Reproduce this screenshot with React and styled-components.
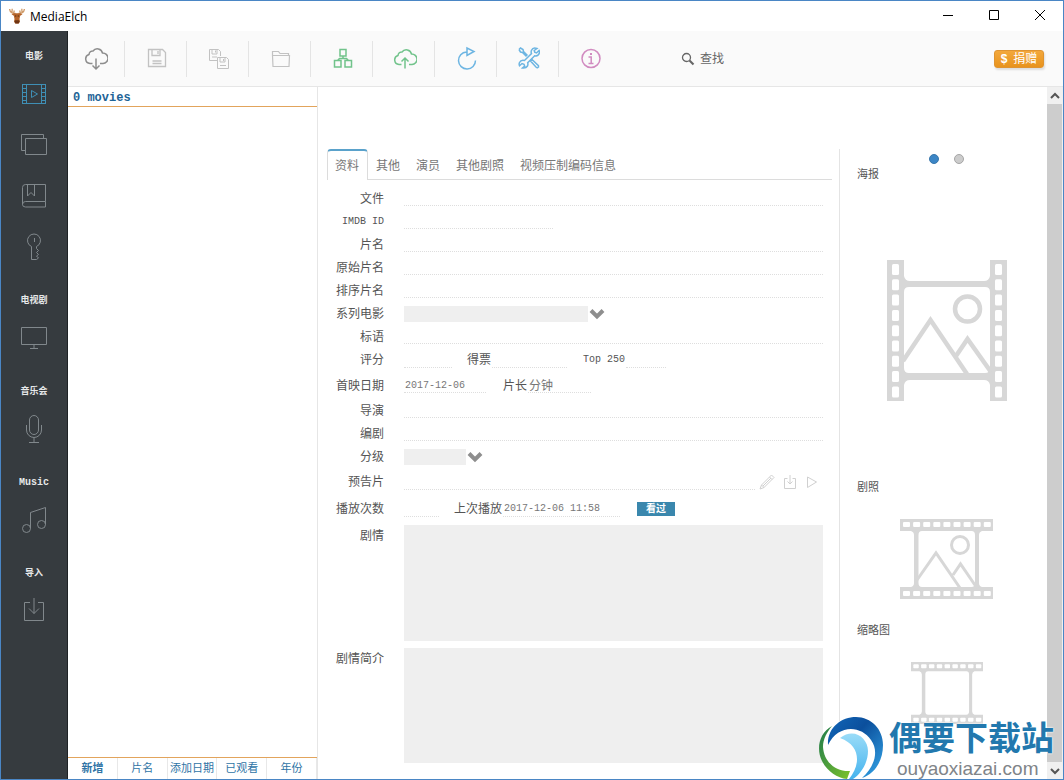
import React, { useState } from 'react'
import styled, { createGlobalStyle } from 'styled-components'

const GlobalStyle = createGlobalStyle`
  * {
    box-sizing: border-box;
  }

  body {
    margin: 0;
  }

  body, button, input, select, textarea {
    font-family: 'Liberation Sans', 'Noto Sans CJK SC', sans-serif;
  }

  button {
    background: none;
    border: 0;
    color: inherit;
    cursor: pointer;
    padding: 0;
  }

  svg {
    display: block;
    flex: none;
  }
`

const mono = `'Liberation Mono', 'Noto Sans CJK SC', monospace`

const Window = styled.div`
  background-color: #fff;
  border: 1px solid #4a86c5;
  color: #000;
  display: flex;
  flex-direction: column;
  height: 100vh;
  overflow: hidden;
  position: relative;
`

const TitleBar = styled.header`
  align-items: center;
  display: flex;
  flex: none;
  height: 30px;
  padding-left: 8px;
`

const Title = styled.h1`
  color: #000;
  flex: 1;
  font: 400 12px 'Open Sans', sans-serif;
  margin: 0 0 0 5px;
`

const WindowButton = styled.button`
  align-items: center;
  display: flex;
  height: 30px;
  justify-content: center;
  width: 46px;
`

const Body = styled.div`
  display: flex;
  flex: 1;
  min-height: 0;
`

const Sidebar = styled.nav`
  background-color: #363b3f;
  border-right: 1px solid #1e2225;
  flex: none;
  padding-top: 15px;
  width: 67px;
`

const SidebarGroup = styled.section`
  margin-bottom: 18px;
`

const SidebarTitle = styled.h2`
  color: #e6e8e9;
  font: 700 9px/20px 'Noto Sans CJK SC', sans-serif;
  margin: 0 0 2px;
  text-align: center;

  &:lang(en) {
    font: 700 10px/22px ${mono};
    margin: 0;
  }
`

const SidebarButton = styled.button`
  align-items: center;
  color: ${({ $active }) => ($active ? '#3f8fb5' : '#81888c')};
  display: flex;
  height: 51px;
  justify-content: center;
  width: 100%;
`

const Main = styled.main`
  display: flex;
  flex: 1;
  flex-direction: column;
  min-width: 0;
`

const Toolbar = styled.div`
  align-items: center;
  background-color: #fafafa;
  border-bottom: 1px solid #e6e6e6;
  display: flex;
  flex: none;
  height: 56px;
  padding-right: 19px;
`

const ToolButton = styled.button`
  align-items: center;
  border-right: 1px solid ${({ $last }) => ($last ? 'transparent' : '#e4e4e4')};
  color: ${({ $color }) => $color};
  display: flex;
  height: 36px;
  justify-content: center;
  padding-left: 3px;
  width: 62px;

  &:first-child {
    padding-left: 0;
    width: 57px;
  }
`

const Search = styled.label`
  align-items: center;
  color: #666;
  display: flex;
  flex: 1;
  gap: 5px;
  margin-left: 60px;
`

const SearchInput = styled.input`
  background: none;
  border: 0;
  color: #666;
  font-size: 12px;
  outline: 0;
  padding: 0;
  width: 200px;

  &::placeholder {
    color: #666;
    opacity: 1;
  }
`

const Donate = styled.button`
  align-items: center;
  background: linear-gradient(#f3a83c, #e8931d);
  border: 1px solid #df9431;
  border-radius: 3px;
  box-shadow: 1px 2px 2px #ddd;
  color: #fff;
  display: flex;
  font-size: 12px;
  gap: 6px;
  height: 18px;
  justify-content: center;
  line-height: 16px;
  width: 50px;
`

const Content = styled.div`
  display: flex;
  flex: 1;
  min-height: 0;
`

const ListPanel = styled.section`
  border-right: 1px solid #e6e6e6;
  display: flex;
  flex: none;
  flex-direction: column;
  width: 250px;
`

const ListHeader = styled.h2`
  border-bottom: 1px solid #e2a45c;
  color: #1e6496;
  font: 700 12px/22px ${mono};
  height: 20px;
  margin: 0;
  padding-left: 5px;
`

const SortBar = styled.div`
  border-top: 1px solid #e2a45c;
  display: grid;
  grid-template-columns: repeat(5, 1fr);
  height: 22px;
  margin-top: auto;
`

const SortButton = styled.button`
  border-right: 1px solid #e8e8e8;
  color: #2f74a5;
  font-size: 11px;
  font-weight: ${({ $active }) => ($active ? 700 : 400)};
  line-height: 19px;
  white-space: nowrap;
`

const Detail = styled.div`
  display: flex;
  flex: 1;
  gap: 7px;
  min-width: 0;
  padding: 62px 0 16px 9px;
`

const Form = styled.form`
  display: flex;
  flex: 1;
  flex-direction: column;
  min-width: 0;
`

const Tabs = styled.div`
  border-bottom: 1px solid #dcdcdc;
  display: flex;
  flex: none;
  height: 31px;
  margin-bottom: 7px;
`

const Tab = styled.button`
  border: solid transparent;
  border-width: 2px 0 0;
  color: #777;
  font-size: 12px;
  height: 31px;
  line-height: 28px;
  padding: 0 8px;

  &[aria-selected='true'] {
    background-color: #fff;
    border-color: #5aa2cb #dcdcdc transparent;
    border-radius: 4px 4px 0 0;
    border-width: 2px 1px 0;
    padding: 0 8px 0 7px;
  }
`

const Row = styled.div`
  align-items: ${({ $top }) => ($top ? 'flex-start' : 'center')};
  display: flex;
  flex: none;
  height: ${({ $height = 23 }) => $height}px;
  padding-right: 9px;
`

const Label = styled.label`
  color: #555;
  flex: none;
  font-size: 12px;
  line-height: 22px;
  margin-right: 20px;
  text-align: right;
  width: 57px;

  &:lang(en) {
    font-family: ${mono};
    font-size: 10px;
  }
`

const InlineLabel = styled(Label)`
  margin: 0 1px 0 ${({ $gap }) => $gap}px;
  width: auto;
`

const Input = styled.input`
  background: none;
  border: 0;
  border-bottom: 1px dotted #dedede;
  color: #777;
  font-family: ${mono};
  font-size: ${({ $large }) => ($large ? 12 : 10)}px;
  height: 15px;
  min-width: 0;
  outline: 0;
  padding: 0 1px;
  ${({ $width }) => ($width ? `width: ${$width}px;` : 'flex: 1;')}
`

const Picker = styled.div`
  align-items: center;
  color: #8e8e8e;
  display: flex;
  gap: 1px;
`

const Select = styled.select`
  appearance: none;
  background-color: #efefef;
  border: 0;
  height: 16px;
  width: ${({ $width }) => $width}px;
`

const TrailerActions = styled.div`
  align-items: center;
  color: #d0d0d0;
  display: flex;
  gap: 8px;
  padding: 0 4px;
`

const Watched = styled.button`
  background-color: #3a87ad;
  color: #fff;
  font-size: 10px;
  font-weight: 700;
  height: 14px;
  line-height: 14px;
  margin-left: 17px;
  width: 38px;
`

const TextRow = styled(Row)`
  flex: 1;
  height: auto;
  margin-top: ${({ $gap }) => $gap}px;
  min-height: 60px;
`

const TextArea = styled.textarea`
  align-self: stretch;
  background-color: #efefef;
  border: 0;
  flex: 1;
  font-size: 12px;
  min-width: 0;
  outline: 0;
  resize: none;
`

const Artwork = styled.aside`
  border-left: 1px solid #e4e4e4;
  flex: none;
  padding: 5px 11px 0 17px;
  width: 208px;
`

const Dots = styled.div`
  display: flex;
  gap: 15px;
  height: 13px;
  justify-content: center;
`

const Dot = styled.button`
  background-color: ${({ $active }) => ($active ? '#3c86c6' : '#ccc')};
  border: 1px solid ${({ $active }) => ($active ? '#3977ac' : '#a6a6a6')};
  border-radius: 50%;
  height: 10px;
  width: 10px;
`

const ArtTitle = styled.h3`
  color: #555;
  font-size: 11px;
  font-weight: 400;
  line-height: 14px;
  margin: 0;
`

const ArtBox = styled.div`
  align-items: center;
  color: #d7d7d7;
  display: flex;
  height: ${({ $height }) => $height}px;
  justify-content: center;
`

const ScrollBar = styled.div`
  background-color: #f0f0f0;
  color: #555;
  display: flex;
  flex: none;
  flex-direction: column;
  padding-right: 1px;
  width: 16px;
`

const ScrollButton = styled.button`
  align-items: center;
  display: flex;
  height: 17px;
  justify-content: center;
`

const ScrollThumb = styled.div`
  background-color: #cdcdcd;
  flex: 1;
`

const Watermark = styled.div`
  align-items: flex-end;
  bottom: 0;
  display: flex;
  pointer-events: none;
  position: absolute;
  right: 9px;
`

const WatermarkName = styled.div`
  color: #2278ae;
  font-size: 33px;
  font-weight: 700;
  line-height: 38px;
  text-shadow: 0 0 2px #fff, 0 0 2px #fff;
`

const WatermarkUrl = styled.div`
  color: #808488;
  font-size: 19px;
  line-height: 21px;
  padding-left: 8px;
  text-shadow: 0 0 2px #fff, 0 0 2px #fff;
`

const Icon = ({ w = 28, h = 28, stroke = 1, children }) => (
  <svg
    width={w}
    height={h}
    viewBox={`0 0 ${w} ${h}`}
    fill="none"
    stroke="currentColor"
    strokeWidth={stroke}
    aria-hidden="true"
  >
    {children}
  </svg>
)

const Moose = () => (
  <svg width="16" height="16" viewBox="0 0 16 16" aria-hidden="true">
    <path
      d="M6.500 5.500C3.500 5.500 1 4 .6 1M3 4.500 3.200.8M4.600 5.200 5.300 2.500M9.500 5.500C12.500 5.500 15 4 15.400 1M13 4.500 12.800.8M11.400 5.200 10.700 2.500"
      fill="none"
      stroke="#cf9a68"
      strokeWidth="1.300"
    />
    <path d="M2.500 6.300 5.500 5.300h5l3 1-2.300 1.500-.7 3.200.5 2.500-1.200 2H6.200L5 13.500l.5-2.500-.7-3.200z" fill="#b5642a" />
    <path d="M6 12.300h4l.5 1.500-1 1.700h-3l-1-1.700z" fill="#6d3413" />
    <path d="M6.300 7.500h.9v1h-.9zM8.800 7.500h.9v1h-.9z" fill="#2e1708" />
  </svg>
)

const MoviesIcon = () => (
  <Icon w={26} h={22}>
    <path d="M1 1.500h24M1 20.500h24M1.500 1v20M5.500 1v20M20.500 1v20M24.500 1v20M1 5.500h4.500M1 9.500h4.500M1 13.500h4.500M1 17.500h4.500M20.500 5.500H25M20.500 9.500H25M20.500 13.500H25M20.500 17.500H25M10.500 7.500v7l6-3.500z" />
  </Icon>
)

const SetsIcon = () => (
  <Icon w={28} h={24}>
    <path d="M5.500 5.500h21v16h-21zM5 17.500H1.500v-16h22v4" />
  </Icon>
)

const GenresIcon = () => (
  <Icon w={26} h={26}>
    <path d="M24.500 18.500v-17H4.500q-3 0-3 3v17q0 2.500 3 2.500h20v-5.500h-20q-3 0-3 3M6.500 1.500v11.500l3.500-3.500 3.500 3.500V1.500" />
  </Icon>
)

const KeyIcon = () => (
  <Icon w={18} h={28}>
    <path d="M6.500 13.500A6.500 6.500 0 1 1 11.500 13.500v2l2 2-2 2 2 2-2 1.500 2 2-2 1.500h-5zM9.500 5v4" />
  </Icon>
)

const TvIcon = () => (
  <Icon w={28} h={24}>
    <path d="M1.500 1.500h25v17h-25zM14 18.500v4M10 22.500h8" />
  </Icon>
)

const MicIcon = () => (
  <Icon w={20} h={30}>
    <rect x="5.500" y="1.500" width="9" height="19" rx="4.500" />
    <path d="M2.500 11v5a7.500 7.500 0 0 0 15 0v-5M10 23.500v5M5 28.500h10" />
  </Icon>
)

const MusicIcon = () => (
  <Icon w={26} h={28}>
    <circle cx="5.500" cy="22.500" r="4" />
    <circle cx="20.500" cy="18.500" r="4" />
    <path d="M9.500 22.500V6.500l15-5v17" />
  </Icon>
)

const ImportIcon = () => (
  <Icon w={24} h={28}>
    <path d="M8 5.500H2.500v18h19v-18H16M12 1v15.500M7 11.500l5 5 5-5" />
  </Icon>
)

const cloud =
  'M8.500 17.500H6a4.600 4.600 0 0 1-1-9 3.800 3.800 0 0 1 4-3.500 5.300 5.300 0 0 1 9.500 2 4.900 4.900 0 0 1 .5 10.500h-3'

const CloudDownIcon = () => (
  <Icon w={24} h={26} stroke={1.500}>
    <path d={cloud} />
    <path d="M12 12.500v10M8.500 19.500 12 23l3.500-3.500" />
  </Icon>
)

const CloudUpIcon = () => (
  <Icon w={24} h={24} stroke={1.500}>
    <path d={cloud} />
    <path d="M12 21.500V11M8.500 14.500 12 11l3.500 3.500" />
  </Icon>
)

const SaveIcon = () => (
  <Icon w={20} h={22} stroke={1.300}>
    <path d="M1.500 1.500h14l3 3v14h-17zM5 1.500v6h8v-6M11 3v3M5.500 13h9M5.500 15.500h9" />
  </Icon>
)

const SaveAllIcon = () => (
  <Icon w={22} h={22}>
    <path d="M9 12.500H1.500v-11h9l2 2V8M4 1.500V6h5V1.500M7.500 2.500v2M4 9h5M9.500 9.500h9l2 2v9h-11zM12 9.500V14h5V9.500M15.500 11v2M12 17.500h6" />
  </Icon>
)

const FolderIcon = () => (
  <Icon w={20} h={18} stroke={1.200}>
    <path d="M1.500 5V1.500h6l1.500 2h8.500V5M1.500 5.500h17l-.5 11H2z" />
  </Icon>
)

const BlocksIcon = () => (
  <Icon w={20} h={22} stroke={1.500}>
    <path d="M7 1.500h6v6.500H7zM1.500 12.500h6.500V19H1.500zM12 12.500h6.500V19H12zM10 8v2.500M4.500 12.500l2-2h7l2 2" />
  </Icon>
)

const ReloadIcon = () => (
  <Icon w={22} h={26} stroke={1.500}>
    <path d="M10.500 6a8.500 8.500 0 1 0 9 8.500M11 2v7.500L18 5.500z" />
  </Icon>
)

const ToolsIcon = () => (
  <Icon w={22} h={24} stroke={1.500}>
    <path d="M1 2.500 2.500 1 5 2.500l.5 2 4 4M1 2.500 2.500 5l2 .5 4 4M12.500 14l1.500-1.500 6.500 6.200q.5 1.300-.7 1.800-.8.500-1.600-.2z" />
    <path d="M19 1.500q-4-1.500-5.500 1.700-.7 1.800 0 3.300L6.500 13.500Q3 12.500 1.500 15.500q-.7 1.500 0 3.200L4 16.500l2 .8.700 1.900L4.500 21q3.500.5 5-2 .7-1.500.2-3.200l7-7q3.600.7 4.600-2.500.5-1.600-.2-2.800L18.500 6l-1.800-.7-.5-1.800z" />
  </Icon>
)

const InfoIcon = () => (
  <Icon w={20} h={22} stroke={1.500}>
    <circle cx="10" cy="10.500" r="9" />
    <path d="M7.500 9h2.700v6M7.500 15.500h5" />
    <path d="M10 5v2" strokeWidth="2" />
  </Icon>
)

const SearchIcon = () => (
  <Icon w={14} h={14}>
    <circle cx="5.500" cy="5.500" r="4" strokeWidth="1.300" />
    <path d="m8.500 8.500 4 4" strokeWidth="2.200" />
  </Icon>
)

const Chevron = () => (
  <Icon w={16} h={12} stroke={4}>
    <path d="m2 2.500 6 6 6-6" />
  </Icon>
)

// Film frame standing upright, used for posters
const PosterFilm = () => (
  <svg width="120" height="141" viewBox="0 0 120 141" aria-hidden="true">
    <path
      fill="currentColor"
      fillRule="evenodd"
      d="M0 0h17v16q1 5 6 5h74q5 0 6-5V0h17v141h-17v-16q-1-5-6-5H23q-5 0-6 5v16H0zM22 27q-5 0-5 5v76q0 5 5 5h76q5 0 5-5V32q0-5-5-5z"
    />
    {[5, 108].map(x =>
      Array.from({ length: 9 }, (_, i) => (
        <rect key={`${x}-${i}`} x={x} y={4 + i * 15.300} width="7" height="11" rx="1.500" fill="#fff" />
      )),
    )}
    <g fill="none" stroke="currentColor" strokeWidth="4.500">
      <path d="M16 101 43.500 60 80 114M69 96l11.500-17L104 112" />
      <circle cx="80.500" cy="49" r="12.500" />
    </g>
  </svg>
)

const WideFilm = ({ width, height, scenery }) => (
  <svg width={width} height={height} viewBox="0 0 93 80" aria-hidden="true">
    <path
      fill="currentColor"
      fillRule="evenodd"
      d="M0 0h93v12H82q-3 1-3 4v48q0 3 3 4h11v12H0V68h11q3-1 3-4V16q0-3-3-4H0zM22 12q-3.500 0-3.500 4v48q0 4 3.500 4h49.500q3.500 0 3.500-4V16q0-4-3.500-4z"
    />
    {[3, 72].map(y =>
      Array.from({ length: 9 }, (_, i) => (
        <rect key={`${y}-${i}`} x={3 + i * 10.100} y={y} width="7" height="5" rx="1" fill="#fff" />
      )),
    )}
    {scenery && (
      <g fill="none" stroke="currentColor" strokeWidth="3">
        <path d="M17 61 36 34l24 35M53 56l7.500-11L77 69" />
        <circle cx="60" cy="26" r="8.500" />
      </g>
    )}
  </svg>
)

const Swirl = () => (
  <svg width="74" height="64" viewBox="0 4 74 64" aria-hidden="true">
    <defs>
      <linearGradient id="deep" x1="0" y1="0" x2="1" y2="1">
        <stop offset="0" stopColor="#1267b9" />
        <stop offset=".4" stopColor="#0b4f9c" />
        <stop offset="1" stopColor="#35a8ea" />
      </linearGradient>
      <linearGradient id="sky" x1="0" y1="0" x2="0" y2="1">
        <stop offset="0" stopColor="#9adcf8" />
        <stop offset="1" stopColor="#45b3ee" />
      </linearGradient>
      <linearGradient id="leaf" x1="0" y1="0" x2="1" y2="1">
        <stop offset="0" stopColor="#1f7a4c" />
        <stop offset="1" stopColor="#7cc32c" />
      </linearGradient>
    </defs>
    <circle cx="36" cy="38" r="30" fill="#fff" />
    <path d="M17 15C4 22 1 38 7 50c5 10 15 17 25 18l3-8C22 61 9 52 8 36c0-8 4-15 9-21z" fill="url(#leaf)" />
    <path d="M13 34C12 17 26 6 41 6c15 0 27 12 27 28 0 17-9 29-21 33 13-12 17-27 9-38C46 14 23 13 13 34z" fill="url(#deep)" />
    <path d="M25 27c14-11 28 0 28 13 0 11-6 22-15 28h-4c11-13 13-33-9-41z" fill="url(#sky)" />
  </svg>
)

const groups = [
  {
    title: '电影',
    items: [['电影', MoviesIcon], ['电影集', SetsIcon], ['类型', GenresIcon], ['分级', KeyIcon]],
  },
  { title: '电视剧', items: [['电视剧', TvIcon]] },
  { title: '音乐会', items: [['音乐会', MicIcon]] },
  { title: 'Music', lang: 'en', items: [['Music', MusicIcon]] },
  { title: '导入', items: [['导入', ImportIcon]] },
]

const tools = [
  ['下载', CloudDownIcon, '#8d8d8d'],
  ['保存', SaveIcon, '#c2c2c2'],
  ['全部保存', SaveAllIcon, '#c2c2c2'],
  ['文件夹', FolderIcon, '#c2c2c2'],
  ['媒体中心', BlocksIcon, '#71c38b'],
  ['导出', CloudUpIcon, '#71c38b'],
  ['刷新', ReloadIcon, '#6db5e2'],
  ['设置', ToolsIcon, '#6db5e2'],
  ['关于', InfoIcon, '#d18bc0'],
]

const tabs = ['资料', '其他', '演员', '其他剧照', '视频压制编码信息']
const sortings = ['新增', '片名', '添加日期', '已观看', '年份']

const Field = ({ id, label, lang, width }) => (
  <Row>
    <Label htmlFor={id} lang={lang}>{label}</Label>
    <Input id={id} $width={width} />
  </Row>
)

const MovieForm = () => {
  const [tab, setTab] = useState(tabs[0])

  return (
    <Form onSubmit={e => e.preventDefault()}>
      <Tabs role="tablist">
        {tabs.map(name => (
          <Tab
            key={name}
            type="button"
            role="tab"
            aria-selected={name === tab}
            onClick={() => setTab(name)}
          >
            {name}
          </Tab>
        ))}
      </Tabs>

      <Field id="file" label="文件" />
      <Field id="imdb" label="IMDB ID" lang="en" width={149} />
      <Field id="name" label="片名" />
      <Field id="original" label="原始片名" />
      <Field id="sort" label="排序片名" />
      <Row>
        <Label htmlFor="set">系列电影</Label>
        <Picker>
          <Select id="set" $width={184} />
          <Chevron />
        </Picker>
      </Row>
      <Field id="tagline" label="标语" />
      <Row $height={24}>
        <Label htmlFor="rating">评分</Label>
        <Input id="rating" $width={48} />
        <InlineLabel htmlFor="votes" $gap={15}>得票</InlineLabel>
        <Input id="votes" $width={75} />
        <InlineLabel htmlFor="top" lang="en" $gap={16}>Top 250</InlineLabel>
        <Input id="top" $width={40} />
      </Row>
      <Row $height={27}>
        <Label htmlFor="released">首映日期</Label>
        <Input id="released" $width={82} defaultValue="2017-12-06" />
        <InlineLabel htmlFor="runtime" $gap={17}>片长</InlineLabel>
        <Input id="runtime" $large $width={63} defaultValue="分钟" />
      </Row>
      <Field id="director" label="导演" />
      <Field id="writer" label="编剧" />
      <Row>
        <Label htmlFor="cert">分级</Label>
        <Picker>
          <Select id="cert" $width={62} />
          <Chevron />
        </Picker>
      </Row>
      <Row $height={28}>
        <Label htmlFor="trailer">预告片</Label>
        <Input id="trailer" />
        <TrailerActions>
          <button type="button" aria-label="编辑">
            <Icon w={16} h={16}>
              <path d="m1 15 1.500-4L12.500 1l2.500 2.500-10 10zM10.500 3l2.500 2.500M2.500 11 5 13.500M4 12l8-8" />
            </Icon>
          </button>
          <button type="button" aria-label="下载预告片">
            <Icon w={14} h={16}>
              <path d="M4.500 4.500h-3v10h11v-10h-3M7 1v9M4.500 7.500 7 10l2.500-2.500" />
            </Icon>
          </button>
          <button type="button" aria-label="播放">
            <Icon w={14} h={14}>
              <path d="M2.500 2v10.500l9-5.500z" />
            </Icon>
          </button>
        </TrailerActions>
      </Row>
      <Row $height={26}>
        <Label htmlFor="count">播放次数</Label>
        <Input id="count" $width={35} />
        <InlineLabel htmlFor="last" $gap={15}>上次播放</InlineLabel>
        <Input id="last" $width={117} defaultValue="2017-12-06 11:58" />
        <Watched type="button">看过</Watched>
      </Row>
      <TextRow $top $gap={3}>
        <Label htmlFor="plot">剧情</Label>
        <TextArea id="plot" />
      </TextRow>
      <TextRow $top $gap={7}>
        <Label htmlFor="outline">剧情简介</Label>
        <TextArea id="outline" />
      </TextRow>
    </Form>
  )
}

export default function App () {
  return (
    <Window lang="zh-CN">
      <GlobalStyle />
      <TitleBar>
        <Moose />
        <Title>MediaElch</Title>
        <WindowButton aria-label="最小化">
          <Icon w={12} h={12}>
            <path d="M1 5.500h10" />
          </Icon>
        </WindowButton>
        <WindowButton aria-label="最大化">
          <Icon w={12} h={12}>
            <path d="M1.500.5h9v9h-9z" />
          </Icon>
        </WindowButton>
        <WindowButton aria-label="关闭">
          <Icon w={12} h={12}>
            <path d="m1 0 10 10M11 0 1 10" />
          </Icon>
        </WindowButton>
      </TitleBar>

      <Body>
        <Sidebar>
          {groups.map(group => (
            <SidebarGroup key={group.title}>
              <SidebarTitle lang={group.lang}>{group.title}</SidebarTitle>
              {group.items.map(([name, Glyph]) => (
                <SidebarButton key={name} aria-label={name} $active={name === '电影'}>
                  <Glyph />
                </SidebarButton>
              ))}
            </SidebarGroup>
          ))}
        </Sidebar>

        <Main>
          <Toolbar>
            {tools.map(([name, Glyph, color], i) => (
              <ToolButton
                key={name}
                aria-label={name}
                $color={color}
                $last={i === tools.length - 1}
              >
                <Glyph />
              </ToolButton>
            ))}
            <Search>
              <SearchIcon />
              <SearchInput placeholder="查找" aria-label="查找" />
            </Search>
            <Donate>
              <b>$</b>
              <span>捐赠</span>
            </Donate>
          </Toolbar>

          <Content>
            <ListPanel>
              <ListHeader>0 movies</ListHeader>
              <SortBar>
                {sortings.map((name, i) => (
                  <SortButton key={name} $active={i === 0}>{name}</SortButton>
                ))}
              </SortBar>
            </ListPanel>

            <Detail>
              <MovieForm />
              <Artwork>
                <Dots>
                  <Dot $active aria-label="第一页" />
                  <Dot aria-label="第二页" />
                </Dots>
                <ArtTitle>海报</ArtTitle>
                <ArtBox $height={299}>
                  <PosterFilm />
                </ArtBox>
                <ArtTitle>剧照</ArtTitle>
                <ArtBox $height={129}>
                  <WideFilm width={93} height={80} scenery />
                </ArtBox>
                <ArtTitle>缩略图</ArtTitle>
                <ArtBox $height={112}>
                  <WideFilm width={72} height={62} />
                </ArtBox>
              </Artwork>
            </Detail>

            <ScrollBar>
              <ScrollButton aria-label="向上滚动">
                <Icon w={10} h={8} stroke={2}>
                  <path d="m1 6 4-4 4 4" />
                </Icon>
              </ScrollButton>
              <ScrollThumb />
              <ScrollButton aria-label="向下滚动">
                <Icon w={10} h={8} stroke={2}>
                  <path d="m1 2 4 4 4-4" />
                </Icon>
              </ScrollButton>
            </ScrollBar>
          </Content>
        </Main>
      </Body>

      <Watermark>
        <Swirl />
        <div>
          <WatermarkName>偶要下载站</WatermarkName>
          <WatermarkUrl>ouyaoxiazai.com</WatermarkUrl>
        </div>
      </Watermark>
    </Window>
  )
}
